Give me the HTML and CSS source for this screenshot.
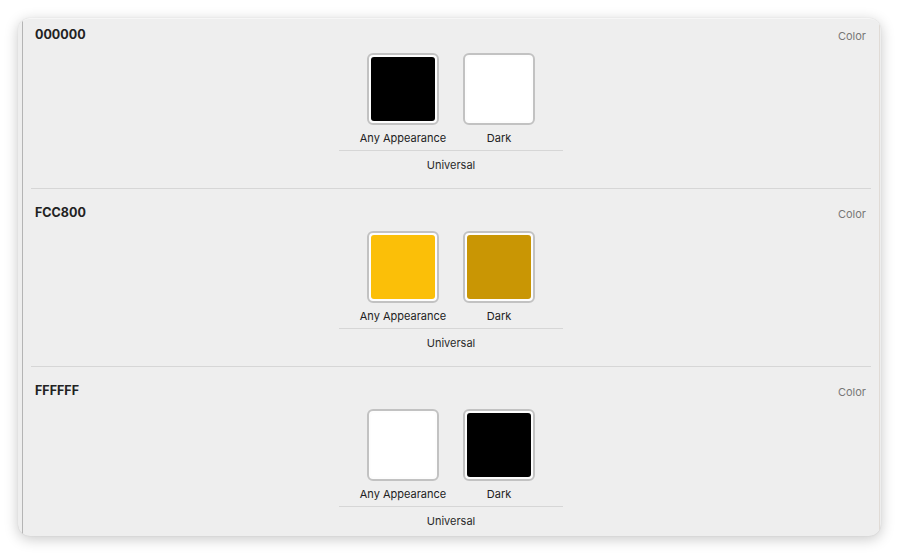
FILE: index.html
```html
<!DOCTYPE html>
<html>
<head>
<meta charset="utf-8">
<link rel="stylesheet" href="styles.css">
</head>
<body>
<div class="window">
  <div class="pane">
    <div class="list">
      <section class="item">
        <div class="item-head"><span class="name">000000</span><span class="kind">Color</span></div>
        <div class="group">
          <div class="cells">
            <div class="cell"><div class="well"><div class="fill black"></div></div><div class="label">Any Appearance</div></div>
            <div class="cell"><div class="well"><div class="fill white"></div></div><div class="label">Dark</div></div>
          </div>
          <div class="group-name">Universal</div>
        </div>
      </section>
      <section class="item">
        <div class="item-head"><span class="name">FCC800</span><span class="kind">Color</span></div>
        <div class="group">
          <div class="cells">
            <div class="cell"><div class="well"><div class="fill yellow"></div></div><div class="label">Any Appearance</div></div>
            <div class="cell"><div class="well"><div class="fill dyellow"></div></div><div class="label">Dark</div></div>
          </div>
          <div class="group-name">Universal</div>
        </div>
      </section>
      <section class="item">
        <div class="item-head"><span class="name">FFFFFF</span><span class="kind">Color</span></div>
        <div class="group">
          <div class="cells">
            <div class="cell"><div class="well"><div class="fill white"></div></div><div class="label">Any Appearance</div></div>
            <div class="cell"><div class="well"><div class="fill black"></div></div><div class="label">Dark</div></div>
          </div>
          <div class="group-name">Universal</div>
        </div>
      </section>
    </div>
  </div>
</div>
</body>
</html>
```

FILE: styles.css
```css
html, body {
  margin: 0;
  padding: 0;
  background: #ffffff;
}
body {
  padding: 18px 19px 18px 18px;
  font-family: Inter, "Noto Sans", sans-serif;
  color: #222;
}
.window {
  height: 518px;
  background: #eeeeee;
  border-radius: 12px;
  box-shadow: 0 3px 14px rgba(0, 0, 0, 0.22), 0 0 1px rgba(0, 0, 0, 0.15);
  overflow: hidden;
  padding: 0 1px 0 4px;
  box-sizing: border-box;
  border-top: 1px solid #f6f6f6;
}
.pane {
  height: 100%;
  border-left: 1px solid #b4b4b4;
  border-right: 1px solid #e0dbd6;
  overflow: hidden;
}
.list {
  margin-top: -8px;
  padding: 0 8px;
}
.item {
  border-bottom: 1px solid #d6d6d6;
  padding-top: 16px;
  box-sizing: content-box;
  height: 161px;
}
.item-head {
  display: flex;
  justify-content: space-between;
  align-items: flex-start;
  padding: 0 4px 0 4px;
  height: 16px;
}
.name {
  font-size: 12.5px;
  line-height: 15px;
  font-weight: 700;
  color: #222;
}
.kind {
  font-size: 11px;
  line-height: 15px;
  padding-top: 2px;
  color: #777;
  margin-right: 1px;
}
.group {
  width: 224px;
  margin: 10px auto 0;
}
.cells {
  display: flex;
  justify-content: center;
  gap: 24px;
  padding-bottom: 5px;
  border-bottom: 1px solid #d6d6d6;
}
.cell {
  display: flex;
  flex-direction: column;
  align-items: center;
  width: 72px;
}
.well {
  width: 72px;
  height: 72px;
  box-sizing: border-box;
  border: 2px solid #c2c2c2;
  border-radius: 6px;
  background: #fdfdfd;
  padding: 2px;
}
.fill {
  width: 100%;
  height: 100%;
  border-radius: 3px;
}
.black { background: #000000; }
.white { background: #ffffff; }
.yellow { background: #fbbf08; }
.dyellow { background: #c99604; }
.label {
  margin-top: 6px;
  font-size: 11px;
  line-height: 14px;
  white-space: nowrap;
  color: #222;
}
.group-name {
  margin-top: 7px;
  text-align: center;
  font-size: 11px;
  line-height: 14px;
  color: #2a2a2a;
}
```
